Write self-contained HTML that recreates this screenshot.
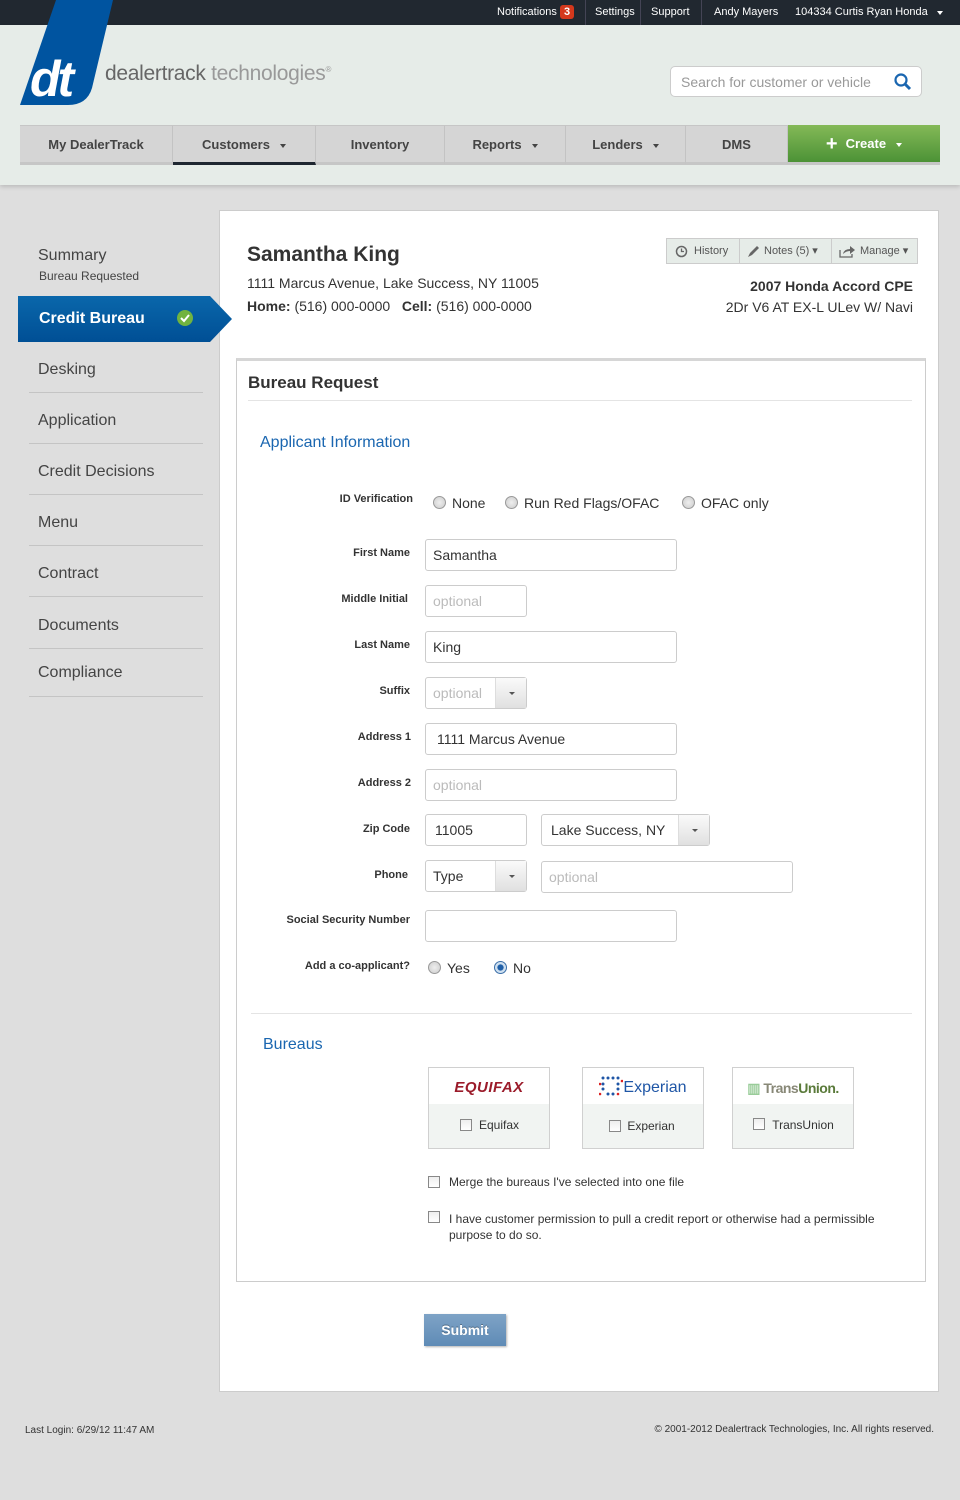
<!DOCTYPE html>
<html><head><meta charset="utf-8"><style>
*{box-sizing:border-box;margin:0;padding:0}
body{width:960px;height:1500px;background:#dedede;font-family:"Liberation Sans",sans-serif;color:#333;position:relative;overflow:hidden}
.a{position:absolute}
.top{left:0;top:0;width:960px;height:25px;background:#212830;color:#fff;font-size:11px}
.top span{position:absolute;top:6px}
.hdr{left:0;top:25px;width:960px;height:160px;background:#e6ece8;box-shadow:0 2px 4px rgba(0,0,0,.15)}
.nav{top:125px;height:40px;background:#d5d5d5;border-right:1px solid #c3c3c3;border-bottom:3px solid #c6c6c6;font-weight:bold;font-size:13px;color:#444;text-align:center;line-height:38px;border-top:1px solid #c6c6c6}
.car{display:inline-block;width:0;height:0;border-left:3px solid transparent;border-right:3px solid transparent;border-top:4px solid #444;margin-left:10px;vertical-align:middle}
.side{left:38px;font-size:16px;color:#444}
.sep{left:29px;width:174px;height:1px;background:#c4c4c4}
.lbl{width:200px;text-align:right;font-size:11px;font-weight:bold;color:#333}
.in{height:32px;border:1px solid #ccc;border-radius:3px;background:#fff;font-size:14px;line-height:30px;padding-left:7px;color:#333}
.ph{color:#bbb}
.dd{position:absolute;right:0;top:0;width:31px;height:30px;border-left:1px solid #ddd;background:linear-gradient(#fafafa,#e0e0e0)}
.dd:after{content:"";position:absolute;left:13px;top:14px;border-left:3px solid transparent;border-right:3px solid transparent;border-top:3px solid #555}
.rad{width:13px;height:13px;border-radius:50%;border:1px solid #999;background:radial-gradient(#eee,#ccc)}
.rt{font-size:14px;color:#333}
.cb{width:12px;height:12px;border:1px solid #888;background:linear-gradient(#eee,#fff)}
.bur{width:122px;height:82px;border:1px solid #d0d0d0;background:#f1f4f2}
.bur .lg{height:36px;background:#fff;text-align:center}
.bur .t{font-size:12px;color:#333;position:absolute;top:50px;left:0;width:100%;text-align:center}
</style></head><body>
<div class="a top">
<span style="left:497px">Notifications</span>
<span style="left:560px;top:5px;background:#d4381c;border-radius:3px;padding:0 4px;font-weight:bold;height:14px;line-height:14px">3</span>
<div class="a" style="left:585px;top:0;width:1px;height:25px;background:#445"></div>
<span style="left:595px">Settings</span>
<div class="a" style="left:640px;top:0;width:1px;height:25px;background:#445"></div>
<span style="left:651px">Support</span>
<div class="a" style="left:701px;top:0;width:1px;height:25px;background:#445"></div>
<span style="left:714px">Andy Mayers</span>
<span style="left:795px">104334 Curtis Ryan Honda</span>
<span style="left:937px;top:11px;border-left:3px solid transparent;border-right:3px solid transparent;border-top:4px solid #fff"></span>
</div>
<div class="a hdr"></div>
<svg class="a" style="left:18px;top:0" width="100" height="108" viewBox="0 0 100 108"><path d="M38 0H95L74 88Q69 105 50 105H2Z" fill="#0054a0"/><text x="12" y="96" font-family="Liberation Sans" font-style="italic" font-weight="bold" font-size="50" fill="#fff" letter-spacing="-3">dt</text></svg>
<div class="a" style="left:105px;top:62px;font-size:21px;color:#666;letter-spacing:-.3px">dealertrack <span style="color:#999">technologies</span><sup style="font-size:8px;color:#999">®</sup></div>
<div class="a" style="left:670px;top:66px;width:252px;height:31px;background:#fff;border:1px solid #ccc;border-radius:5px;font-size:14px;color:#999;padding:7px 10px">Search for customer or vehicle</div>
<svg class="a" style="left:893px;top:72px" width="20" height="20"><circle cx="8" cy="8" r="5.5" stroke="#1a66b0" stroke-width="2.2" fill="none"/><path d="M12 12L17 17" stroke="#1a66b0" stroke-width="3"/></svg>
<div class="a nav" style="left:20px;width:153px">My DealerTrack</div>
<div class="a nav" style="left:173px;width:143px;border-bottom-color:#1e2630">Customers<span class="car"></span></div>
<div class="a nav" style="left:316px;width:129px">Inventory</div>
<div class="a nav" style="left:445px;width:121px">Reports<span class="car"></span></div>
<div class="a nav" style="left:566px;width:120px">Lenders<span class="car"></span></div>
<div class="a nav" style="left:686px;width:102px">DMS</div>
<div class="a nav" style="left:788px;width:152px;background:linear-gradient(#84b957,#4c9236);color:#fff;border:none;line-height:37px;border-bottom:3px solid #c6c6c6;height:40px"><span style="font-size:20px;vertical-align:-2px;margin-right:8px">+</span>Create<span class="car" style="border-top-color:#fff"></span></div>

<div class="a side" style="top:247px">Summary</div>
<div class="a" style="left:39px;top:269px;font-size:12px;color:#444">Bureau Requested</div>
<div class="a side" style="top:361px">Desking</div><div class="a sep" style="top:392px"></div>
<div class="a side" style="top:412px">Application</div><div class="a sep" style="top:443px"></div>
<div class="a side" style="top:463px">Credit Decisions</div><div class="a sep" style="top:494px"></div>
<div class="a side" style="top:514px">Menu</div><div class="a sep" style="top:545px"></div>
<div class="a side" style="top:565px">Contract</div><div class="a sep" style="top:596px"></div>
<div class="a side" style="top:617px">Documents</div><div class="a sep" style="top:648px"></div>
<div class="a side" style="top:664px">Compliance</div><div class="a sep" style="top:696px"></div>

<div class="a" style="left:219px;top:210px;width:720px;height:1182px;background:#fff;border:1px solid #ccc"></div>
<svg class="a" style="left:18px;top:296px" width="216" height="48"><defs><linearGradient id="g" x1="0" y1="0" x2="0" y2="1"><stop offset="0" stop-color="#0a67ab"/><stop offset="1" stop-color="#004f95"/></linearGradient></defs><path d="M0 0H192L214 23L192 46H0Z" fill="url(#g)"/><circle cx="167" cy="22" r="8" fill="#71b33f"/><path d="M163 22L166 25L171 19" stroke="#fff" stroke-width="2" fill="none"/></svg>
<div class="a" style="left:39px;top:310px;font-size:16px;font-weight:bold;color:#fff">Credit Bureau</div>

<div class="a" style="left:247px;top:243px;font-size:21px;font-weight:bold;color:#333">Samantha King</div>
<div class="a" style="left:247px;top:275px;font-size:14px">1111 Marcus Avenue, Lake Success, NY 11005</div>
<div class="a" style="left:247px;top:298px;font-size:14px"><b>Home:</b> (516) 000-0000 &nbsp;&nbsp;<b>Cell:</b> (516) 000-0000</div>
<div class="a" style="left:666px;top:238px;width:252px;height:26px;background:#e6ece8;border:1px solid #ccc;font-size:11px;color:#555;line-height:24px">
<svg class="a" style="left:8px;top:6px" width="13" height="13"><circle cx="6.5" cy="6.5" r="5" stroke="#666" stroke-width="1.5" fill="none"/><path d="M6.5 3.5V6.5H9" stroke="#666" stroke-width="1.3" fill="none"/></svg>
<span class="a" style="left:27px">History</span><span class="a" style="left:72px;top:0;width:1px;height:24px;background:#ccc"></span>
<svg class="a" style="left:80px;top:6px" width="13" height="13"><path d="M1 12L3 8L10 1L12 3L5 10Z" fill="#666"/></svg>
<span class="a" style="left:97px">Notes (5) ▾</span><span class="a" style="left:164px;top:0;width:1px;height:24px;background:#ccc"></span>
<svg class="a" style="left:172px;top:6px" width="17" height="13"><path d="M1 5V12H13V9" stroke="#666" stroke-width="1.3" fill="none"/><path d="M4 9Q5 4 11 4V1L16 5L11 9V6Q7 6 4 9Z" fill="#666"/></svg>
<span class="a" style="left:193px">Manage ▾</span></div>
<div class="a" style="right:47px;top:278px;font-size:14px;font-weight:bold;text-align:right">2007 Honda Accord CPE</div>
<div class="a" style="right:47px;top:299px;font-size:14px;text-align:right">2Dr V6 AT EX-L ULev W/ Navi</div>

<div class="a" style="left:236px;top:358px;width:690px;height:924px;border:1px solid #ccc;border-top:3px solid #d6d6d6"></div>
<div class="a" style="left:248px;top:373px;font-size:17px;font-weight:bold">Bureau Request</div>
<div class="a" style="left:248px;top:400px;width:664px;height:1px;background:#e4e4e4"></div>
<div class="a" style="left:260px;top:434px;font-size:16px;color:#1a66b0">Applicant Information</div>

<div class="a lbl" style="left:213px;top:493px">ID Verification</div>
<div class="a rad" style="left:433px;top:496px"></div><div class="a rt" style="left:452px;top:495px">None</div>
<div class="a rad" style="left:505px;top:496px"></div><div class="a rt" style="left:524px;top:495px">Run Red Flags/OFAC</div>
<div class="a rad" style="left:682px;top:496px"></div><div class="a rt" style="left:701px;top:495px">OFAC only</div>

<div class="a lbl" style="left:210px;top:547px">First Name</div><div class="a in" style="left:425px;top:539px;width:252px">Samantha</div>
<div class="a lbl" style="left:208px;top:593px">Middle Initial</div><div class="a in ph" style="left:425px;top:585px;width:102px">optional</div>
<div class="a lbl" style="left:210px;top:639px">Last Name</div><div class="a in" style="left:425px;top:631px;width:252px">King</div>
<div class="a lbl" style="left:210px;top:685px">Suffix</div><div class="a in ph" style="left:425px;top:677px;width:102px">optional<div class="dd"></div></div>
<div class="a lbl" style="left:211px;top:731px">Address 1</div><div class="a in" style="left:425px;top:723px;width:252px;padding-left:11px">1111 Marcus Avenue</div>
<div class="a lbl" style="left:211px;top:777px">Address 2</div><div class="a in ph" style="left:425px;top:769px;width:252px">optional</div>
<div class="a lbl" style="left:210px;top:823px">Zip Code</div><div class="a in" style="left:425px;top:814px;width:102px;padding-left:9px">11005</div>
<div class="a in" style="left:541px;top:814px;width:169px;padding-left:9px">Lake Success, NY<div class="dd"></div></div>
<div class="a lbl" style="left:208px;top:869px">Phone</div><div class="a in" style="left:425px;top:860px;width:102px">Type<div class="dd"></div></div>
<div class="a in ph" style="left:541px;top:861px;width:252px">optional</div>
<div class="a lbl" style="left:210px;top:914px">Social Security Number</div><div class="a in" style="left:425px;top:910px;width:252px"></div>
<div class="a lbl" style="left:210px;top:960px">Add a co-applicant?</div>
<div class="a rad" style="left:428px;top:961px"></div><div class="a rt" style="left:447px;top:960px">Yes</div>
<div class="a rad" style="left:494px;top:961px;background:radial-gradient(#1f5fa8 35%,#cfe0f0 45%);border-color:#3a6ea8"></div><div class="a rt" style="left:513px;top:960px">No</div>

<div class="a" style="left:251px;top:1013px;width:661px;height:1px;background:#e4e4e4"></div>
<div class="a" style="left:263px;top:1036px;font-size:16px;color:#1a66b0">Bureaus</div>

<div class="a bur" style="left:428px;top:1067px"><div class="lg"><span style="font-size:15px;font-weight:bold;font-style:italic;color:#9b1b2a;line-height:40px;letter-spacing:.5px">EQUIFAX</span></div><div class="a cb" style="left:31px;top:51px"></div><div class="t" style="left:10px">Equifax</div></div>
<div class="a bur" style="left:582px;top:1067px"><div class="lg"><svg style="vertical-align:-4px" width="24" height="22"><g fill="#1f56a6"><circle cx="4" cy="4" r="1.5"/><circle cx="9" cy="4" r="1.5"/><circle cx="14" cy="4" r="1.5"/><circle cx="19" cy="4" r="1.5"/><circle cx="4" cy="10" r="1.5"/><circle cx="19" cy="10" r="1.5"/><circle cx="4" cy="15" r="1.5"/><circle cx="19" cy="15" r="1.5"/><circle cx="9" cy="20" r="1.5"/><circle cx="14" cy="20" r="1.5"/></g><g fill="#d22"><circle cx="1" cy="10" r="1.3"/><circle cx="23" cy="7" r="1.3"/><circle cx="1" cy="20" r="1.3"/><circle cx="19" cy="20" r="1.3"/></g></svg><span style="font-size:16px;color:#1f56a6;line-height:40px">Experian</span></div><div class="a cb" style="left:26px;top:52px"></div><div class="t" style="left:8px;top:51px">Experian</div></div>
<div class="a bur" style="left:732px;top:1067px"><div class="lg"><span style="font-size:14px;color:#887;line-height:40px;font-weight:bold;letter-spacing:-.5px"><span style="color:#9c9;">▥ </span>Trans<span style="color:#5a7a3a">Union.</span></span></div><div class="a cb" style="left:20px;top:50px"></div><div class="t" style="left:10px">TransUnion</div></div>

<div class="a cb" style="left:428px;top:1176px"></div><div class="a" style="left:449px;top:1175px;font-size:12px">Merge the bureaus I've selected into one file</div>
<div class="a cb" style="left:428px;top:1211px"></div><div class="a" style="left:449px;top:1211px;font-size:12px;line-height:16px;width:450px">I have customer permission to pull a credit report or otherwise had a permissible purpose to do so.</div>

<div class="a" style="left:424px;top:1314px;width:82px;height:32px;background:linear-gradient(#7ea3c6,#5f8bb6);color:#fff;font-weight:bold;font-size:14px;text-align:center;line-height:32px;box-shadow:1px 1px 2px rgba(0,0,0,.3);text-shadow:0 -1px 0 rgba(0,0,0,.3)">Submit</div>

<div class="a" style="left:25px;top:1425px;font-size:10px">Last Login: 6/29/12 11:47 AM</div>
<div class="a" style="right:26px;top:1424px;font-size:10px">© 2001-2012 Dealertrack Technologies, Inc. All rights reserved.</div>
</body></html>
